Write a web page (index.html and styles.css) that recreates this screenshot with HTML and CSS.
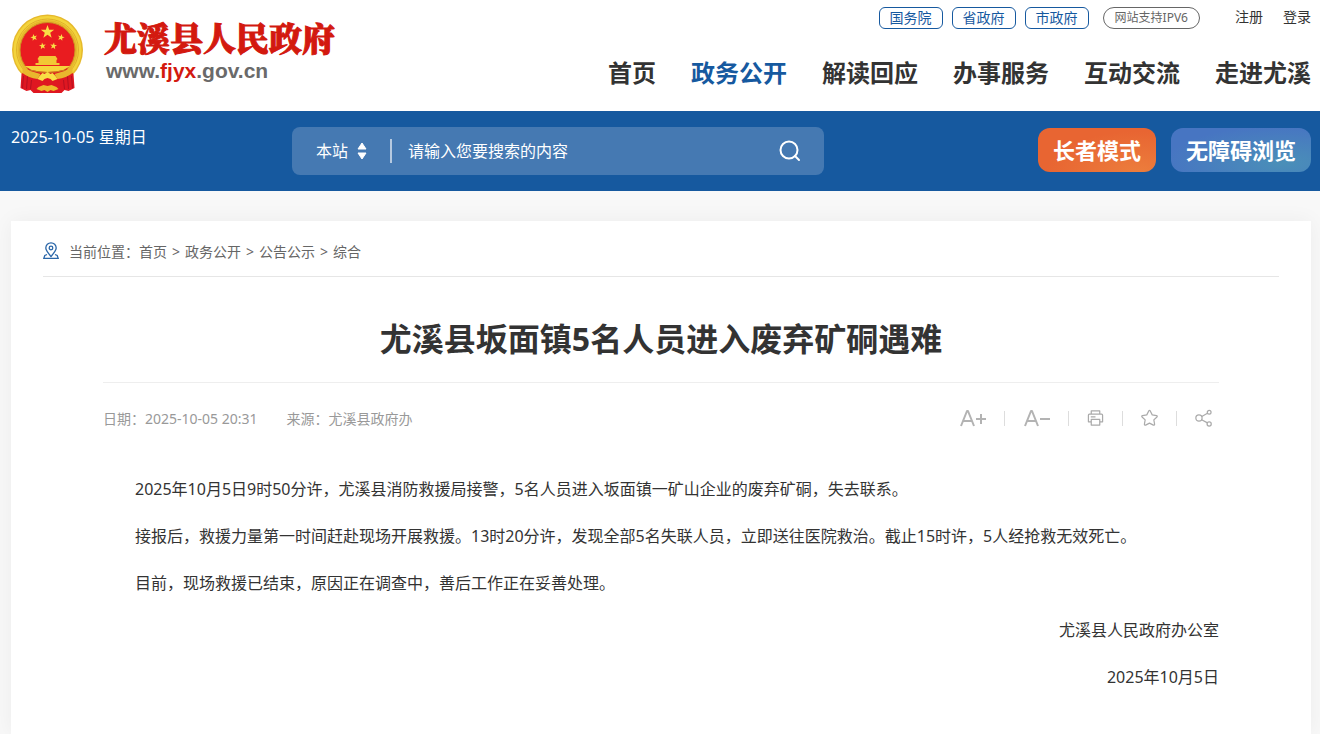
FILE: index.html
```html
<!DOCTYPE html>
<html lang="zh-CN">
<head>
    <meta charset="UTF-8">
    <meta name="viewport" content="width=device-width, initial-scale=1.0">
    <title>尤溪县坂面镇5名人员进入废弃矿硐遇难</title>
    <link rel="stylesheet" href="styles.css">
</head>
<body>
    <header class="header wrap">
        <a class="logo" href="#">
            <svg class="emblem" viewBox="0 0 72 80" aria-hidden="true">
                <defs>
                    <path id="star" d="M0-10 2.4-3.2 9.5-3.1 3.9 1.2 5.9 8.1 0 4 -5.9 8.1 -3.9 1.2 -9.5-3.1 -2.4-3.2Z"/>
                </defs>
                <circle cx="36" cy="36" r="35.5" fill="#e6b92c"/>
                <circle cx="36" cy="36" r="32" fill="none" stroke="#f3d43c" stroke-width="4"/>
                <circle cx="36" cy="36" r="31" fill="none" stroke="#e0b02a" stroke-width="1"/>
                <circle cx="36" cy="36" r="27.5" fill="#e91c20" stroke="#cf8f22"/>
                <g fill="#f9df45">
                    <use href="#star" transform="translate(36 18) scale(.7)"/>
                    <use href="#star" transform="translate(22.500 23.500) rotate(-15) scale(.36)"/>
                    <use href="#star" transform="translate(49.500 23.500) rotate(15) scale(.36)"/>
                    <use href="#star" transform="translate(31 32) rotate(-8) scale(.36)"/>
                    <use href="#star" transform="translate(42 32) rotate(8) scale(.36)"/>
                </g>
                <path d="M28 42h16l2 3-1 1v3h3v2H24v-2h3v-3l-1-1Z" fill="#f2c834"/>
                <path d="M10 60l7-6h38l7 6 1 14-6 3-4-1-3 3H22l-3-3-4 1-6-3Z" fill="#df1721"/>
                <path d="M12 62l-1 12M16 62l-1 13M60 62l1 12M56 62l1 13M20 66l-1 9M52 66l1 9" stroke="#b51020" fill="none"/>
                <path d="M13 52h46l-7 4q-7 2-16 2t-16-2Z" fill="#f6d43c"/>
                <path d="M11 52l8 5 10 3-3 5q-9-1-15-6ZM61 52l-8 5-10 3 3 5q9-1 15-6Z" fill="#e9b72d"/>
                <path d="M18 56q18 5 36 0" fill="none" stroke="#c9881e"/>
                <path d="M28 62l3-3 2 1 3-2 3 2 2-1 3 3 2 3-5 2-2-2-3-1-3 1-2 2-5-2Z" fill="#f9df45"/>
                <path d="M27 73l5-2 4 1 4-1 5 2 2 2-5 2-3-1-3 2-3-2-3 1-5-2Z" fill="#edb92b"/>
            </svg>
            <span class="logo-text">
                <span class="logo-name">尤溪县人民政府</span>
                <span class="logo-url">www.<em>fjyx</em>.gov.cn</span>
            </span>
        </a>
        <div class="header-right">
            <div class="top-links">
                <a class="gov" href="#">国务院</a>
                <a class="gov" href="#">省政府</a>
                <a class="gov" href="#">市政府</a>
                <a class="ipv6" href="#">网站支持IPV6</a>
                <a class="user" href="#">注册</a>
                <a class="user" href="#">登录</a>
            </div>
            <nav class="nav">
                <a href="#">首页</a>
                <a class="active" href="#">政务公开</a>
                <a href="#">解读回应</a>
                <a href="#">办事服务</a>
                <a href="#">互动交流</a>
                <a href="#">走进尤溪</a>
            </nav>
        </div>
    </header>

    <div class="bar">
        <div class="bar-inner wrap">
            <span class="today">2025-10-05 星期日</span>
            <form class="search">
                <label class="scope">
                    <select aria-label="搜索范围">
                        <option>本站</option>
                    </select>
                    <svg width="10" height="18" viewBox="0 0 10 18" aria-hidden="true">
                        <path d="M5 1l4 6H1ZM1 11h8l-4 6Z" fill="#fff" stroke="#fff" stroke-linejoin="round"/>
                    </svg>
                </label>
                <input type="text" aria-label="搜索" placeholder="请输入您要搜索的内容">
                <button type="submit" aria-label="搜索">
                    <svg width="24" height="24" viewBox="0 0 24 24" aria-hidden="true">
                        <circle cx="11" cy="11" r="8.5"/>
                        <path d="M17 17l4 4"/>
                    </svg>
                </button>
            </form>
            <div class="modes">
                <button type="button" class="mode elder">长者模式</button>
                <button type="button" class="mode barrier">无障碍浏览</button>
            </div>
        </div>
    </div>

    <div class="page wrap">
        <main class="card">
            <div class="crumbs">
                <svg width="16" height="18" viewBox="0 0 16 18" aria-hidden="true">
                    <path d="M8 14.5C5 11 2.8 8.500 2.800 6a5.200 5.200 0 0 1 10.400 0C13.200 8.500 11 11 8 14.500Z"/>
                    <circle cx="8" cy="6" r="1.800"/>
                    <path d="M4 12.500l-2.200 1L.8 16.400h14.400l-1-2.900-2.200-1"/>
                </svg>
                <span class="path">当前位置：<a href="#">首页</a><b>&gt;</b><a href="#">政务公开</a><b>&gt;</b><a href="#">公告公示</a><b>&gt;</b><a href="#">综合</a></span>
            </div>
            <article class="article">
                <h1>尤溪县坂面镇5名人员进入废弃矿硐遇难</h1>
                <div class="meta">
                    <span>日期：2025-10-05 20:31</span>
                    <span>来源：尤溪县政府办</span>
                    <div class="tools">
                        <button type="button" aria-label="放大字体">
                            <svg width="27" height="20" viewBox="0 0 27 20"><path class="thick" d="M2 18L8 3h1l6 15M4 13h9"/><path class="thick" d="M22 6v10M17 11h10"/></svg>
                        </button>
                        <i></i>
                        <button type="button" aria-label="缩小字体">
                            <svg width="27" height="20" viewBox="0 0 27 20"><path class="thick" d="M2 18L8 3h1l6 15M4 13h9"/><path class="thick" d="M17 11h10"/></svg>
                        </button>
                        <i></i>
                        <button type="button" aria-label="打印">
                            <svg width="17" height="18" viewBox="0 0 18 18"><path d="M4.500 5V1.500h9V5M4.500 13H1.500V6q0-1 1-1h13q1 0 1 1v7h-3M4.500 10.500h9v6h-9ZM4 7.800h5"/></svg>
                        </button>
                        <i></i>
                        <button type="button" aria-label="收藏">
                            <svg width="17" height="18" viewBox="0 0 18 18"><path d="M8.200 1.500q.8-1 1.600 0l2.100 4.200 4.500.7q1.300.4.500 1.500l-3.300 3.100.8 4.600q0 1.300-1.300.9L9 14.400l-4.100 2.100q-1.300.4-1.300-.9l.8-4.600-3.300-3.100q-.8-1.100.5-1.500l4.500-.7Z"/></svg>
                        </button>
                        <i></i>
                        <button type="button" aria-label="分享">
                            <svg width="17" height="18" viewBox="0 0 18 18"><circle cx="4.200" cy="9" r="3.300"/><circle cx="15" cy="3" r="2"/><circle cx="15" cy="15.300" r="2.200"/><path d="M7.200 7.400l6-3.400M7 10.800l6.200 3.400"/></svg>
                        </button>
                    </div>
                </div>
                <div class="content">
                    <p>2025年10月5日9时50分许，尤溪县消防救援局接警，5名人员进入坂面镇一矿山企业的废弃矿硐，失去联系。</p>
                    <p>接报后，救援力量第一时间赶赴现场开展救援。13时20分许，发现全部5名失联人员，立即送往医院救治。截止15时许，5人经抢救无效死亡。</p>
                    <p>目前，现场救援已结束，原因正在调查中，善后工作正在妥善处理。</p>
                    <p class="sign">尤溪县人民政府办公室</p>
                    <p class="sign">2025年10月5日</p>
                </div>
            </article>
        </main>
    </div>
</body>
</html>
```
FILE: styles.css
```css
* {
    box-sizing: border-box;
}
body {
    display: flex;
    flex-direction: column;
    min-height: 100vh;
    margin: 0;
    background: #f8f8f8;
    color: #333;
    font-family: "Noto Sans", "Noto Sans CJK SC", sans-serif;
    font-size: 16px;
}
a {
    color: inherit;
    text-decoration: none;
}
button, input, select {
    font: inherit;
    border: none;
    background: none;
    padding: 0;
    color: inherit;
}
button {
    cursor: pointer;
}
.wrap {
    padding: 0 9px 0 11px;
}

/* header */
.header {
    display: flex;
    justify-content: space-between;
    height: 111px;
    background: #fff;
}
.logo {
    display: flex;
    gap: 20px;
    padding-top: 14px;
}
.emblem {
    width: 73px;
    height: 80px;
}
.logo-text {
    display: flex;
    flex-direction: column;
    white-space: nowrap;
}
.logo-name {
    color: #d3190f;
    font-family: "Noto Serif CJK SC", "Noto Sans CJK SC", serif;
    font-size: 33px;
    font-weight: 900;
    line-height: 46px;
    -webkit-text-stroke: 1px #d3190f;
}
.logo-url {
    padding-left: 2px;
    color: #6a6a6a;
    font-family: "Liberation Sans", Arial, sans-serif;
    font-size: 21px;
    font-weight: bold;
    line-height: 22px;
}
.logo-url em {
    color: #d3190f;
    font-style: normal;
}
.header-right {
    display: flex;
    flex-direction: column;
    align-items: flex-end;
    padding-top: 7px;
    white-space: nowrap;
}
.top-links {
    display: flex;
    font-size: 14px;
    line-height: 20px;
}
.gov {
    margin-right: 9px;
    padding: 0 10px;
    border: 1px solid #16599f;
    border-radius: 6px;
    color: #16599f;
}
.ipv6 {
    margin-left: 5px;
    margin-right: 15px;
    padding: 0 11px;
    border: 1px solid #666;
    border-radius: 11px;
    color: #666;
    font-size: 12px;
}
.user {
    margin-left: 20px;
}
.nav {
    display: flex;
    gap: 35px;
    margin-top: 26px;
    font-size: 24px;
    font-weight: bold;
    line-height: 36px;
}
.nav .active {
    color: #16599f;
}

/* search bar */
.bar {
    background: #16599f;
    color: #fff;
}
.bar-inner {
    display: flex;
    align-items: flex-start;
    height: 80px;
    padding-top: 16px;
}
.today {
    width: 281px;
    line-height: 20px;
}
.search {
    display: flex;
    align-items: center;
    width: 532px;
    height: 48px;
    padding: 0 22px 0 24px;
    border-radius: 8px;
    background: #4579b2;
}
.scope {
    display: flex;
    align-items: center;
    height: 24px;
    gap: 9px;
    padding-right: 23px;
    border-right: 2px solid #b5c9e0;
}
.scope select {
    width: 32px;
    appearance: none;
}
.search input {
    flex: 1;
    min-width: 0;
    padding-left: 16px;
    outline: none;
}
.search input::placeholder {
    color: #fff;
    opacity: 1;
}
.search button {
    height: 24px;
}
.search button svg {
    fill: none;
    stroke: #fff;
    stroke-width: 2;
    stroke-linecap: round;
}
.modes {
    display: flex;
    gap: 15px;
    margin-left: auto;
    padding-top: 1px;
}
.mode {
    height: 44px;
    padding: 0 15px 2px;
    border-radius: 12px;
    font-size: 22px;
    font-weight: bold;
    white-space: nowrap;
}
.elder {
    background: radial-gradient(ellipse at 85% 100%, #ec7d3c, #e86532 65%);
}
.barrier {
    background: radial-gradient(ellipse at 80% 80%, #4a8fb8, #4775c2 75%);
}

/* article */
.page {
    display: flex;
    flex: 1;
    margin-top: 30px;
    overflow-x: clip;
}
.card {
    flex: 1;
    padding: 0 32px;
    background: #fff;
    box-shadow: 0 0 20px rgba(0, 0, 0, 0.05);
}
.crumbs {
    display: flex;
    align-items: center;
    gap: 10px;
    height: 56px;
    padding-top: 5px;
    border-bottom: 1px solid #e6e6e6;
    color: #666;
    font-size: 14px;
}
.crumbs svg {
    fill: none;
    stroke: #2a66a8;
    stroke-width: 1.3;
}
.path b {
    margin: 0 5px;
    font-weight: normal;
}
.article {
    padding: 0 60px;
}
h1 {
    margin: 0;
    padding: 38px 0 19px;
    border-bottom: 1px solid #eee;
    font-size: 32px;
    line-height: 48px;
    text-align: center;
}
.meta {
    display: flex;
    align-items: center;
    gap: 29px;
    height: 70px;
    color: #999;
    font-size: 14px;
}
.tools {
    display: flex;
    align-items: center;
    gap: 18px;
    margin-left: auto;
    padding-right: 7px;
}
.tools button {
    display: flex;
}
.tools i {
    width: 1px;
    height: 15px;
    background: #ddd;
}
.tools svg {
    fill: none;
    stroke: #aaa;
    stroke-width: 1.3;
    stroke-linejoin: round;
}
.tools .thick {
    stroke: #b3b3b3;
    stroke-width: 2;
}
.content {
    padding-top: 20px;
}
.content p {
    margin: 0 0 15px;
    line-height: 32px;
    text-indent: 2em;
}
.content .sign {
    text-align: right;
}
```
